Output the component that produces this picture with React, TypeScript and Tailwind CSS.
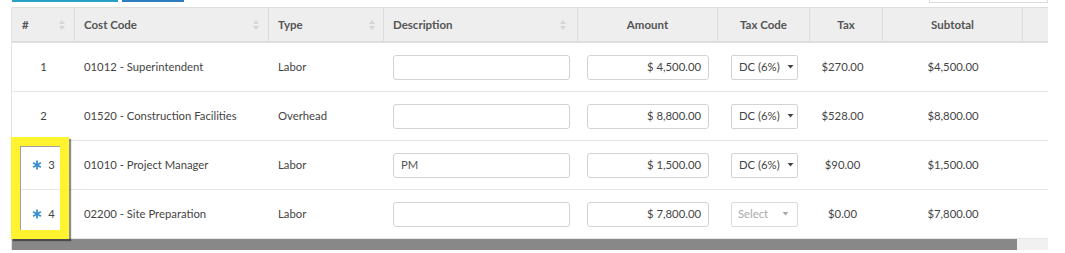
import React from "react";

const cols = "grid grid-cols-[63px_194px_115px_194px_140px_92px_73px_140px_26px]";

function Sort() {
  return (
    <svg width="6" height="12" viewBox="0 0 6 12" className="shrink-0">
      <path d="M3 1 L6 5 L0 5 Z" fill="#d6d6d6" />
      <path d="M3 11 L6 7 L0 7 Z" fill="#d6d6d6" />
    </svg>
  );
}

function Caret({ color = "#444" }: { color?: string }) {
  return (
    <svg width="7" height="4" viewBox="0 0 7 4">
      <path d="M0.5 0 L6.5 0 L3.5 3.5 Z" fill={color} />
    </svg>
  );
}

function Star() {
  return (
    <svg width="10" height="10" viewBox="0 0 10 10" className="shrink-0">
      <g stroke="#3a8fd0" strokeWidth="1.8" strokeLinecap="butt">
        <line x1="5" y1="0.5" x2="5" y2="9.5" />
        <line x1="1.1" y1="2.75" x2="8.9" y2="7.25" />
        <line x1="1.1" y1="7.25" x2="8.9" y2="2.75" />
      </g>
    </svg>
  );
}

type Row = {
  n: string;
  star?: boolean;
  code: string;
  type: string;
  desc: string;
  amount: string;
  taxCode: string | null;
  tax: string;
  subtotal: string;
};

const rows: Row[] = [
  { n: "1", code: "01012 - Superintendent", type: "Labor", desc: "", amount: "$ 4,500.00", taxCode: "DC (6%)", tax: "$270.00", subtotal: "$4,500.00" },
  { n: "2", code: "01520 - Construction Facilities", type: "Overhead", desc: "", amount: "$ 8,800.00", taxCode: "DC (6%)", tax: "$528.00", subtotal: "$8,800.00" },
  { n: "3", star: true, code: "01010 - Project Manager", type: "Labor", desc: "PM", amount: "$ 1,500.00", taxCode: "DC (6%)", tax: "$90.00", subtotal: "$1,500.00" },
  { n: "4", star: true, code: "02200 - Site Preparation", type: "Labor", desc: "", amount: "$ 7,800.00", taxCode: null, tax: "$0.00", subtotal: "$7,800.00" },
];

export default function App() {
  return (
    <div
      className="relative w-[1065px] h-[253px] bg-white overflow-hidden text-[11.3px] text-[#444]"
      style={{ fontFamily: "Lato, 'Open Sans', sans-serif" }}
    >
      {/* top toolbar remnants */}
      <div className="flex h-[7px] items-start pl-[12px] pr-[17px]">
        <div className="w-[106px] h-[2px] bg-[#2aa0c4]" />
        <div className="ml-[4px] w-[62px] h-[2px] bg-[#2f7cc0]" />
        <div className="ml-auto w-[119px] h-[3px] border-b border-x border-[#d8dde2]" />
      </div>

      <div className="ml-[11px] w-[1037px] border-l border-[#e3e3e3]">
        {/* header */}
        <div className={`${cols} h-[36px] bg-[#eeeeee] border-t border-b-2 border-[#dedede] font-bold text-[#555] text-[11.5px]`}>
          <div className="flex items-center justify-between pl-[10px] pr-[9px] border-r border-[#dcdcdc]">
            <span>#</span>
            <Sort />
          </div>
          <div className="flex items-center justify-between pl-[9px] pr-[9px] border-r border-[#dcdcdc]">
            <span>Cost Code</span>
            <Sort />
          </div>
          <div className="flex items-center justify-between pl-[9px] pr-[8px] border-r border-[#dcdcdc]">
            <span>Type</span>
            <Sort />
          </div>
          <div className="flex items-center justify-between pl-[9px] pr-[11px] border-r border-[#dcdcdc]">
            <span>Description</span>
            <Sort />
          </div>
          <div className="flex items-center justify-center border-r border-[#dcdcdc]">Amount</div>
          <div className="flex items-center justify-center border-r border-[#dcdcdc]">Tax Code</div>
          <div className="flex items-center justify-center border-r border-[#dcdcdc]">Tax</div>
          <div className="flex items-center justify-center border-r border-[#dcdcdc]">Subtotal</div>
          <div />
        </div>

        {/* body */}
        {rows.map((r) => (
          <div key={r.n} className={`${cols} h-[49px] border-b border-[#e6e6e6] text-[#444]`}>
            <div className="flex items-center justify-center gap-[6px]">
              {r.star && <Star />}
              <span>{r.n}</span>
            </div>
            <div className="flex items-center pl-[9px]">{r.code}</div>
            <div className="flex items-center pl-[9px]">{r.type}</div>
            <div className="flex items-center pl-[9px]">
              <div className="w-[177px] h-[25px] border border-[#d0d4d8] rounded-[3px] flex items-center pl-[7px] text-[#555]">
                {r.desc}
              </div>
            </div>
            <div className="flex items-center pl-[9px]">
              <div className="w-[122px] h-[25px] border border-[#d0d4d8] rounded-[3px] flex items-center justify-end pr-[7px] text-[#444]">
                {r.amount}
              </div>
            </div>
            <div className="flex items-center pl-[13px]">
              {r.taxCode ? (
                <div className="w-[67px] h-[25px] border border-[#d0d4d8] rounded-[2px] flex items-center pl-[7px] gap-[7px] text-[#444]">
                  <span>{r.taxCode}</span>
                  <Caret />
                </div>
              ) : (
                <div className="w-[67px] h-[25px] border border-[#d8dce0] rounded-[2px] flex items-center pl-[6px] pr-[8px] justify-between text-[#aaa]">
                  <span>Select</span>
                  <Caret color="#aaa" />
                </div>
              )}
            </div>
            <div className="flex items-center justify-center pr-[8px]">{r.tax}</div>
            <div className="flex items-center justify-center">{r.subtotal}</div>
            <div />
          </div>
        ))}

        {/* scrollbar */}
        <div className="flex h-[11px] bg-[#f1f1f1]">
          <div className="w-[1005px] h-full bg-[#888888]" />
        </div>
      </div>

      {/* yellow annotation box */}
      <div className="absolute left-[11px] top-[137px] w-[58px] h-[102px] border-[9px] border-[#fff22e] shadow-[2px_2px_1px_rgba(0,0,0,0.45)]">
        <div className="w-full h-full shadow-[inset_1px_1px_0_#a0a0a0]" />
      </div>
    </div>
  );
}
